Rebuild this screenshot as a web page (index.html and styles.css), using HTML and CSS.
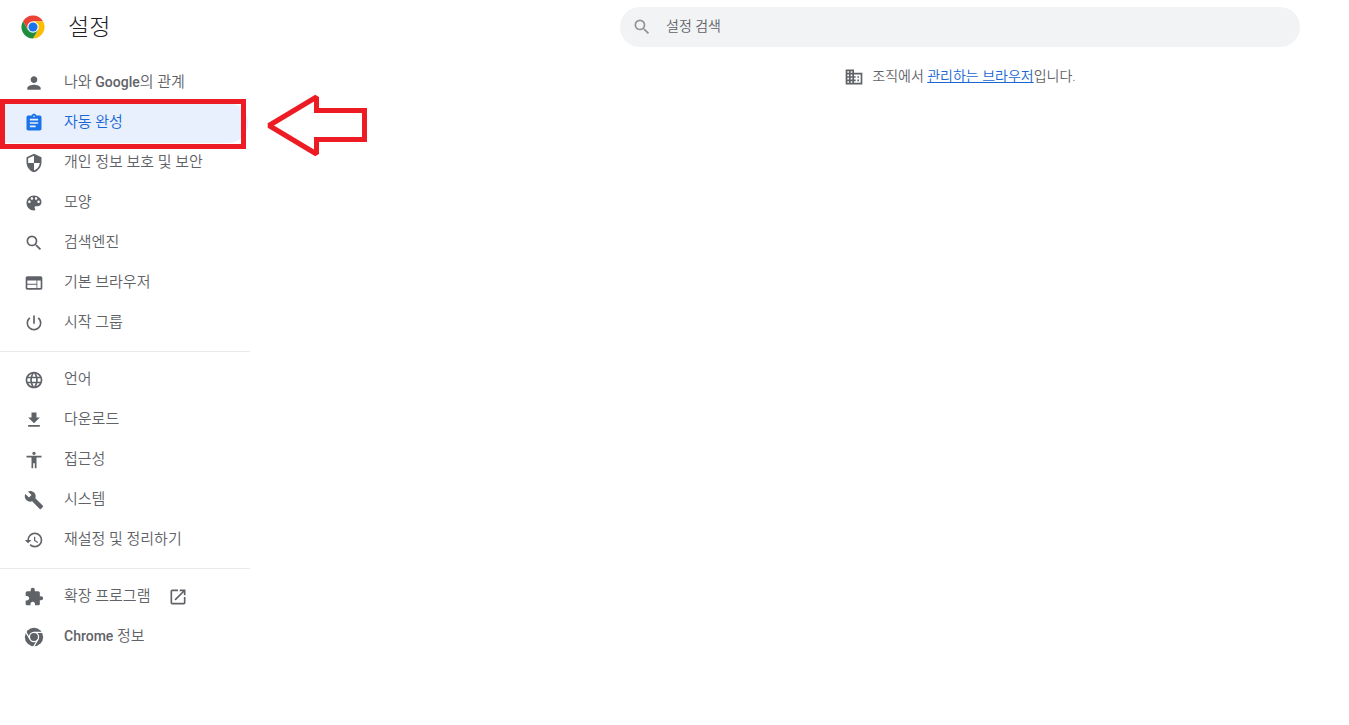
FILE: index.html
```html
<!DOCTYPE html>
<html lang="ko">
<head>
	<meta charset="utf-8">
	<meta name="viewport" content="width=device-width, initial-scale=1">
	<title>설정</title>
	<link rel="stylesheet" href="styles.css">
</head>
<body>
	<header class="toolbar">
		<div class="brand">
			<svg class="logo" viewBox="-1 -1 50 50">
				<path fill="#ea4335" d="M3.2 12 13.6 30 24 24V12h20.8A24 24 0 0 0 3.2 12z"/>
				<path fill="#fbbc04" d="M24 12h20.8A24 24 0 0 1 24 48l10.4-18z"/>
				<path fill="#1e8e3e" d="M3.2 12A24 24 0 0 0 24 48l10.4-18H13.6z"/>
				<circle cx="24" cy="24" r="12" fill="#fff"/>
				<circle cx="24" cy="24" r="9.5" fill="#1a73e8"/>
			</svg>
			<h1>설정</h1>
		</div>
		<div class="search_area">
			<label class="search">
				<svg class="icon" viewBox="0 0 24 24"><path d="M15.5 14h-.79l-.28-.27A6.47 6.47 0 0 0 16 9.5 6.5 6.5 0 1 0 9.5 16c1.61 0 3.09-.59 4.23-1.57l.27.28v.79l5 4.99L20.49 19l-4.99-5zm-6 0C7.01 14 5 11.99 5 9.5S7.01 5 9.5 5 14 7.01 14 9.5 11.99 14 9.5 14z"/></svg>
				<input type="search" placeholder="설정 검색" aria-label="설정 검색">
			</label>
		</div>
	</header>

	<div class="screen">
		<nav class="menu">
			<a class="item" href="#people">
				<svg class="icon" viewBox="0 0 24 24"><path d="M12 12c2.21 0 4-1.79 4-4s-1.79-4-4-4-4 1.79-4 4 1.79 4 4 4zm0 2c-2.67 0-8 1.34-8 4v2h16v-2c0-2.66-5.33-4-8-4z"/></svg>
				<span class="text">나와 <span class="latin">Google</span>의 관계</span>
			</a>
			<div class="marked">
				<a class="item selected" href="#autofill">
					<svg class="icon" viewBox="0 0 24 24"><path d="M19 3h-4.18C14.4 1.84 13.3 1 12 1s-2.4.84-2.82 2H5c-1.1 0-2 .9-2 2v14c0 1.1.9 2 2 2h14c1.1 0 2-.9 2-2V5c0-1.1-.9-2-2-2zm-7 0c.55 0 1 .45 1 1s-.45 1-1 1-1-.45-1-1 .45-1 1-1zm2 14H7v-2h7v2zm3-4H7v-2h10v2zm0-4H7V7h10v2z"/></svg>
					<span class="text">자동 완성</span>
				</a>
				<div class="mark_box"></div>
				<svg class="mark_arrow" viewBox="0 0 104 66"><path d="M5 32.500 52.500 4v13.500h48v29h-48V61z"/></svg>
			</div>
			<a class="item" href="#privacy">
				<svg class="icon" viewBox="0 0 24 24"><path d="M12 1 3 5v6c0 5.550 3.840 10.740 9 12 5.160-1.260 9-6.450 9-12V5l-9-4zm0 10.990h7c-.53 4.120-3.280 7.790-7 8.940V12H5V6.300l7-3.110v8.800z"/></svg>
				<span class="text">개인 정보 보호 및 보안</span>
			</a>
			<a class="item" href="#appearance">
				<svg class="icon" viewBox="0 0 24 24"><path d="M12 3c-4.970 0-9 4.030-9 9s4.030 9 9 9c.83 0 1.500-.67 1.500-1.500 0-.39-.15-.74-.39-1.010-.23-.26-.38-.61-.38-.99 0-.83.67-1.500 1.500-1.500H16c2.760 0 5-2.240 5-5 0-4.420-4.030-8-9-8zm-5.500 9c-.83 0-1.500-.67-1.500-1.500S5.670 9 6.500 9 8 9.670 8 10.500 7.330 12 6.500 12zm3-4C8.670 8 8 7.330 8 6.500S8.670 5 9.500 5s1.500.67 1.500 1.500S10.330 8 9.500 8zm5 0c-.83 0-1.500-.67-1.500-1.500S13.670 5 14.500 5s1.500.67 1.500 1.500S15.330 8 14.500 8zm3 4c-.83 0-1.500-.67-1.500-1.500S16.670 9 17.500 9s1.500.67 1.500 1.500-.67 1.500-1.500 1.500z"/></svg>
				<span class="text">모양</span>
			</a>
			<a class="item" href="#search">
				<svg class="icon" viewBox="0 0 24 24"><path d="M15.5 14h-.79l-.28-.27A6.47 6.47 0 0 0 16 9.5 6.5 6.5 0 1 0 9.5 16c1.61 0 3.09-.59 4.23-1.57l.27.28v.79l5 4.99L20.49 19l-4.99-5zm-6 0C7.01 14 5 11.99 5 9.5S7.01 5 9.5 5 14 7.01 14 9.5 11.99 14 9.5 14z"/></svg>
				<span class="text">검색엔진</span>
			</a>
			<a class="item" href="#default">
				<svg class="icon" viewBox="0 0 24 24"><path d="M20 4H4c-1.100 0-1.990.9-1.990 2L2 18c0 1.100.9 2 2 2h16c1.100 0 2-.9 2-2V6c0-1.100-.9-2-2-2zm-5 14H4v-4h11v4zm0-5H4V9h11v4zm5 5h-4V9h4v9z"/></svg>
				<span class="text">기본 브라우저</span>
			</a>
			<a class="item" href="#startup">
				<svg class="icon" viewBox="0 0 24 24"><path d="M13 3h-2v10h2V3zm4.830 2.170-1.420 1.420A6.920 6.920 0 0 1 19 12c0 3.870-3.130 7-7 7s-7-3.130-7-7c0-2.190 1.010-4.140 2.580-5.420L6.170 5.170A8.932 8.932 0 0 0 3 12a9 9 0 0 0 18 0c0-2.740-1.230-5.180-3.170-6.830z"/></svg>
				<span class="text">시작 그룹</span>
			</a>
			<hr>
			<a class="item" href="#languages">
				<svg class="icon" viewBox="0 0 24 24"><path d="M11.990 2C6.470 2 2 6.480 2 12s4.470 10 9.990 10C17.520 22 22 17.520 22 12S17.520 2 11.990 2zm6.930 6h-2.950a15.650 15.650 0 0 0-1.380-3.560A8.030 8.030 0 0 1 18.920 8zM12 4.040c.83 1.200 1.480 2.530 1.910 3.960h-3.820c.43-1.430 1.080-2.760 1.910-3.960zM4.260 14C4.100 13.360 4 12.690 4 12s.1-1.360.26-2h3.380c-.08.66-.14 1.320-.14 2s.06 1.340.14 2H4.260zm.82 2h2.950c.32 1.250.78 2.450 1.380 3.560A7.987 7.987 0 0 1 5.080 16zm2.950-8H5.080a7.987 7.987 0 0 1 4.330-3.560A15.650 15.650 0 0 0 8.030 8zM12 19.960c-.83-1.200-1.480-2.530-1.910-3.960h3.820c-.43 1.430-1.080 2.760-1.910 3.960zM14.340 14H9.660c-.09-.66-.16-1.320-.16-2s.07-1.350.16-2h4.680c.09.65.16 1.320.16 2s-.07 1.340-.16 2zm.25 5.560c.6-1.110 1.060-2.310 1.380-3.560h2.950a8.030 8.030 0 0 1-4.330 3.560zM16.360 14c.08-.66.14-1.320.14-2s-.06-1.340-.14-2h3.380c.16.64.26 1.310.26 2s-.1 1.360-.26 2h-3.380z"/></svg>
				<span class="text">언어</span>
			</a>
			<a class="item" href="#downloads">
				<svg class="icon" viewBox="0 0 24 24"><path d="M19 9h-4V3H9v6H5l7 7 7-7zM5 18v2h14v-2H5z"/></svg>
				<span class="text">다운로드</span>
			</a>
			<a class="item" href="#accessibility">
				<svg class="icon" viewBox="0 0 24 24"><path d="M12 2c1.100 0 2 .9 2 2s-.9 2-2 2-2-.9-2-2 .9-2 2-2zm9 7h-6v13h-2v-6h-2v6H9V9H3V7h18v2z"/></svg>
				<span class="text">접근성</span>
			</a>
			<a class="item" href="#system">
				<svg class="icon" viewBox="0 0 24 24"><path d="m22.700 19-9.100-9.100c.9-2.300.4-5-1.500-6.900-2-2-5-2.400-7.400-1.300L9 6 6 9 1.600 4.700C.4 7.100.9 10.100 2.900 12.100c1.900 1.900 4.600 2.400 6.900 1.500l9.100 9.100c.4.4 1 .4 1.400 0l2.300-2.300c.5-.4.5-1.100.1-1.400z"/></svg>
				<span class="text">시스템</span>
			</a>
			<a class="item" href="#reset">
				<svg class="icon" viewBox="0 0 24 24"><path d="M13 3a9 9 0 0 0-9 9H1l3.890 3.890.07.14L9 12H6c0-3.870 3.130-7 7-7s7 3.130 7 7-3.130 7-7 7c-1.930 0-3.680-.79-4.940-2.060l-1.420 1.420A8.954 8.954 0 0 0 13 21a9 9 0 0 0 0-18zm-1 5v5l4.280 2.540.72-1.210-3.500-2.080V8H12z"/></svg>
				<span class="text">재설정 및 정리하기</span>
			</a>
			<hr>
			<a class="item" href="#extensions">
				<svg class="icon" viewBox="0 0 24 24"><path d="M20.500 11H19V7c0-1.100-.9-2-2-2h-4V3.500a2.500 2.500 0 0 0-5 0V5H4c-1.100 0-1.990.9-1.990 2v3.800H3.500c1.490 0 2.700 1.210 2.700 2.700s-1.210 2.700-2.700 2.700H2V20c0 1.100.9 2 2 2h3.800v-1.500c0-1.490 1.210-2.700 2.700-2.700s2.700 1.210 2.700 2.700V22H17c1.100 0 2-.9 2-2v-4h1.500a2.500 2.500 0 0 0 0-5z"/></svg>
				<span class="text">확장 프로그램</span>
				<svg class="icon external" viewBox="0 0 24 24"><path d="M19 19H5V5h7V3H5a2 2 0 0 0-2 2v14a2 2 0 0 0 2 2h14c1.100 0 2-.9 2-2v-7h-2v7zM14 3v2h3.590l-9.830 9.830 1.410 1.410L19 6.410V10h2V3h-7z"/></svg>
			</a>
			<a class="item" href="#about">
				<svg class="icon" viewBox="0 0 24 24">
					<circle cx="12" cy="12" r="11"/>
					<circle cx="12" cy="12" r="5.500" fill="none" stroke="#fff" stroke-width="1.500"/>
					<path fill="none" stroke="#fff" stroke-width="1.500" d="M12 6.500h11M7.240 14.750 1.740 5.220M16.760 14.750l-5.500 9.530"/>
				</svg>
				<span class="text"><span class="latin">Chrome</span> 정보</span>
			</a>
		</nav>

		<main class="content">
			<div class="managed">
				<svg class="icon" viewBox="0 0 24 24"><path d="M12 7V3H2v18h20V7H12zM6 19H4v-2h2v2zm0-4H4v-2h2v2zm0-4H4V9h2v2zm0-4H4V5h2v2zm4 12H8v-2h2v2zm0-4H8v-2h2v2zm0-4H8V9h2v2zm0-4H8V5h2v2zm10 12h-8v-2h2v-2h-2v-2h2v-2h-2V9h8v10zm-2-8h-2v2h2v-2zm0 4h-2v2h2v-2z"/></svg>
				<span class="text">조직에서 <a href="#management">관리하는 브라우저</a>입니다.</span>
			</div>
		</main>
	</div>
</body>
</html>
```
FILE: styles.css
```css
body {
	margin: 0;
	font-family: Roboto, "Noto Sans CJK KR", sans-serif;
	font-size: 14px;
	font-weight: 350;
	color: #5f6368;
	background-color: white;
}
.icon {
	width: 20px;
	height: 20px;
	flex: none;
	fill: #5f6368;
}
.toolbar {
	display: flex;
	align-items: center;
	height: 54px;
}
.brand {
	display: flex;
	align-items: center;
	box-sizing: border-box;
	width: 266px;
	padding-left: 21px;
	flex: none;
}
.logo {
	width: 24px;
	height: 24px;
}
h1 {
	margin: 0 0 0 23px;
	padding-top: 2px;
	font-size: 23px;
	font-weight: 300;
	line-height: 32px;
	color: #202124;
}
.search_area, .content {
	flex: 1;
	padding: 0 49px 0 354px;
}
.search {
	display: flex;
	align-items: center;
	box-sizing: border-box;
	max-width: 680px;
	height: 40px;
	padding: 0 12px;
	border-radius: 20px;
	background-color: #f1f3f4;
}
.search .icon {
	fill: #909396;
}
.search input {
	flex: 1;
	min-width: 0;
	margin-left: 14px;
	padding: 0 0 2px;
	border: 0;
	outline: none;
	background: none;
	font: inherit;
	line-height: 20px;
	color: #202124;
}
.search input::placeholder {
	color: #5f6368;
	opacity: 1;
}
.screen {
	display: flex;
}
.menu {
	width: 266px;
	padding-top: 9px;
	flex: none;
}
.item {
	display: flex;
	align-items: center;
	box-sizing: border-box;
	width: 248px;
	height: 40px;
	padding-left: 24px;
	border-radius: 0 20px 20px 0;
	font-size: 15px;
	color: #5f6368;
	text-decoration: none;
}
.item .text {
	margin-left: 20px;
	padding-bottom: 2px;
	line-height: 20px;
}
.latin {
	font-size: 14px;
	font-weight: 500;
}
.selected {
	background-color: #e8f0fe;
	color: #1967d2;
}
.selected .icon {
	fill: #1a73e8;
}
.item .external {
	margin-left: 18px;
}
hr {
	width: 250px;
	height: 1px;
	margin: 8px 0;
	border: 0;
	background-color: #e8eaed;
}
/* red highlight over the autofill row */
.marked {
	position: relative;
}
.mark_box {
	position: absolute;
	top: -4px;
	left: 0;
	box-sizing: border-box;
	width: 246px;
	height: 50px;
	border: 5px solid #ed1c24;
	pointer-events: none;
}
.mark_arrow {
	position: absolute;
	top: -10px;
	left: 264px;
	width: 104px;
	height: 66px;
	fill: none;
	stroke: #ed1c24;
	stroke-width: 5px;
	stroke-miterlimit: 1.5;
}
.managed {
	display: flex;
	align-items: center;
	justify-content: center;
	max-width: 680px;
	padding-top: 12px;
}
.managed .text {
	margin-left: 8px;
	padding-bottom: 2px;
	line-height: 20px;
}
.managed a {
	color: #1967d2;
}
```
